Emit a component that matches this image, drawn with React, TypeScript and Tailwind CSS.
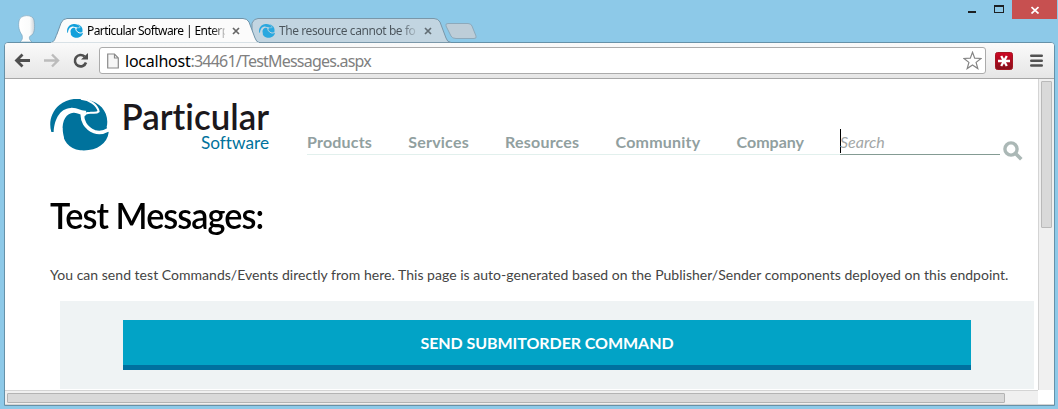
import React from "react";

function Swirl({ className, fill, gap }: { className: string; fill: string; gap: string }) {
  return (
    <svg className={className} viewBox="6 8 176 158" preserveAspectRatio="none">
      <path
        fill={fill}
        d="M10 108C2 82 8 48 34 26C58 7 92 3 118 10C160 18 184 54 175 93L181 110C176 146 142 168 96 164C60 158 40 130 43 95L20 108Z"
      />
      <path
        fill={gap}
        d="M17 112C17 74 34 36 68 35C90 34 96 45 114 44L112 58C98 60 90 49 76 50C56 51 41 72 44 106L48 128L20 124Z"
      />
      <path fill="none" stroke={gap} strokeWidth="11" d="M104 48C98 74 114 97 138 107C154 113 170 109 186 98" />
      <path
        fill="none"
        stroke={gap}
        strokeWidth="6"
        d="M98 7C124 10 147 25 151 46C145 52 137 49 126 50C115 50 108 54 104 62"
      />
    </svg>
  );
}

function TabClose({ color }: { color: string }) {
  return (
    <svg className="h-[8px] w-[8px] shrink-0" viewBox="0 0 8 8">
      <path d="M1 1L7 7M7 1L1 7" stroke={color} strokeWidth="1.7" />
    </svg>
  );
}

function TitleBar() {
  return (
    <div className="flex h-[43px] items-start">
      <svg className="ml-[17px] mt-[14px] h-[28px] w-[20px] shrink-0" viewBox="0 0 20 28">
        <defs>
          <linearGradient id="avatar" x1="0" x2="1">
            <stop offset="0" stopColor="#ffffff" />
            <stop offset="0.7" stopColor="#fafbfb" />
            <stop offset="1" stopColor="#cbd2d7" />
          </linearGradient>
        </defs>
        <path
          d="M3 28C5 26 6 25 5 21C2 17 1 12 2 7C3 0 16 0 17 6C18 12 18 18 15 21C12 22 12 24 13 26L15 28Z"
          fill="url(#avatar)"
          stroke="#7ca6bf"
          strokeWidth=".7"
        />
      </svg>
      <div className="relative mt-[18px] h-[25px] w-[441px] shrink-0">
        <svg className="absolute left-0 top-0 h-[25px] w-[441px]" viewBox="37 18 441 25">
          <path
            d="M250 42.5C254 42 251 37 252 32L252 23Q254 18.500 258 18.500H434Q438 18.500 440 22L446 38Q447 42 451 42.500Z"
            fill="#c2d5e1"
            stroke="#7a97a9"
          />
          <path
            d="M448 23.500H468Q471 23.500 472 26L476 36Q477 38.500 474 38.500H456Q452 38.500 451 36L446 26Q445 23.500 448 23.500Z"
            fill="#bdcdd8"
            stroke="#8da9bb"
          />
          <path
            d="M50 43C55 42 55 38 57 34L61 23Q63 18.500 67 18.500H243Q247 18.500 249 22L255 38Q256 42 260 43Z"
            fill="#fbfbfb"
            stroke="#6f93a9"
          />
          <path d="M51 43H259" stroke="#fafafa" strokeWidth="1" />
        </svg>
        <div className="relative flex h-[25px] items-center font-['Noto_Sans','Open_Sans',sans-serif] text-[12px] leading-[25px]">
          <Swirl className="ml-[30px] h-[14px] w-[16px] shrink-0" fill="#13a0db" gap="#fbfbfb" />
          <span className="ml-[4px] w-[138px] whitespace-nowrap bg-linear-to-r from-black from-88% to-[#cccccc] bg-clip-text tracking-[-0.58px] text-transparent">
            Particular Software | Enterp
          </span>
          <span className="ml-[7px] flex">
            <TabClose color="#666666" />
          </span>
          <Swirl className="ml-[19px] h-[14px] w-[16px] shrink-0" fill="#2aa8df" gap="#c2d5e1" />
          <span className="ml-[4px] w-[138px] whitespace-nowrap bg-linear-to-r from-[#4b555c] from-88% to-[#b4c5d0] bg-clip-text tracking-[-0.42px] text-transparent">
            The resource cannot be fo
          </span>
          <span className="ml-[7px] flex">
            <TabClose color="#626d74" />
          </span>
        </div>
      </div>
      <div className="ml-auto mr-[1px] flex h-[19px]">
        <svg className="h-[19px] w-[45px]" viewBox="0 0 45 19">
          <path d="M1 12H9" stroke="#1d2023" strokeWidth="2" />
          <path d="M27 5h10v8H27Z M28 7v5h8V7Z" fill="#1d2023" fillRule="evenodd" />
        </svg>
        <div className="flex h-[19px] w-[45px] items-center justify-center bg-[#c75050]">
          <svg className="h-[8px] w-[8px]" viewBox="0 0 8 8">
            <path d="M.5 1L7.500 7.500M7.500 1L.5 7.500" stroke="#fff" strokeWidth="1.700" />
          </svg>
        </div>
      </div>
    </div>
  );
}

function Toolbar() {
  return (
    <div className="flex h-[36px] shrink-0 items-center border-b border-[#a7a7a7] bg-linear-to-b from-[#fafafa] to-[#e6e6e6]">
      <svg className="h-[35px] w-[94px] shrink-0" viewBox="5 43 94 35">
        <path d="M30 60.500H16.500M22.500 54.500L16.500 60.500L22.500 66.500" fill="none" stroke="#4f4f4f" strokeWidth="2.800" />
        <path d="M44 60.500H57.500M52 54.500L58 60.500L52 66.500" fill="none" stroke="#bcbcbc" strokeWidth="2.400" />
        <path d="M84.500 56.500A5.700 5.700 0 1 0 86 62.500" fill="none" stroke="#505050" strokeWidth="2.600" />
        <path d="M81 59.500H88V53Z" fill="#505050" />
      </svg>
      <div className="flex h-[27px] w-[887px] shrink-0 items-center rounded-[3px] border border-[#ababab] bg-white">
        <svg className="ml-[7px] h-[16px] w-[12px]" viewBox="0 0 12 16">
          <path d="M.7 1H7.500L11.300 5V15H.7ZM7.500 1V5H11.300" fill="#f6f6f6" stroke="#8a8a8a" strokeWidth="1.200" />
        </svg>
        <span className="ml-[6px] whitespace-nowrap font-['Noto_Sans','Open_Sans',sans-serif] text-[16px] leading-[24px] tracking-[-0.79px] text-[#808080]">
          <span className="tracking-[-0.24px] text-black">localhost</span>:34461/TestMessages.aspx
        </span>
        <svg className="ml-auto mr-[3px] h-[19px] w-[19px]" viewBox="0 0 19 19">
          <path
            d="M9.500 1.300L11.700 7.200L18 7.500L13.100 11.400L14.800 17.500L9.500 14L4.200 17.500L5.900 11.400L1 7.500L7.300 7.200Z"
            fill="#fff"
            stroke="#858585"
            strokeWidth="1.200"
          />
        </svg>
      </div>
      <svg className="ml-[9px] h-[18px] w-[18px] shrink-0" viewBox="0 0 18 18">
        <defs>
          <linearGradient id="ext" x1="0" y1="0" x2="0" y2="1">
            <stop offset="0" stopColor="#cf0624" />
            <stop offset="1" stopColor="#86101b" />
          </linearGradient>
        </defs>
        <rect x=".5" y=".5" width="17" height="17" rx="2" fill="url(#ext)" stroke="#a41722" />
        <path d="M3 9H15M6.200 4L11.800 14M11.800 4L6.200 14" stroke="#fff" strokeWidth="2.300" />
      </svg>
      <svg className="ml-[17px] h-[13px] w-[13px] shrink-0" viewBox="0 0 13 13">
        <path d="M1.200 1.700H11.800M1.200 6.700H11.800M1.200 11.500H11.800" stroke="#525252" strokeWidth="2.400" strokeLinecap="round" />
      </svg>
    </div>
  );
}

function Brand() {
  return (
    <a className="flex w-[220px] shrink-0">
      <Swirl className="mt-px h-[52px] w-[59px] shrink-0" fill="#00729c" gap="#fff" />
      <svg className="ml-[13px] h-[56px] w-[150px] overflow-visible" viewBox="122 98 150 56">
        <text
          x="121.5"
          y="129.5"
          textLength="147.5"
          lengthAdjust="spacingAndGlyphs"
          fill="#1b181c"
          className="font-['Lato',sans-serif] text-[36px] font-semibold [font-variant-ligatures:none]"
        >
          Particular
        </text>
        <text
          x="201"
          y="149"
          textLength="68"
          lengthAdjust="spacingAndGlyphs"
          fill="#00729c"
          className="font-['Lato',sans-serif] text-[17px] [font-variant-ligatures:none]"
        >
          Software
        </text>
      </svg>
    </a>
  );
}

function Header() {
  return (
    <header className="flex h-[58px]">
      <Brand />
      <nav className="ml-[37px] mt-[31px] flex h-[26px] w-[533px] shrink-0 justify-between border-b border-[#e2f0ed] pr-[36px] font-['Lato',sans-serif] text-[16px] font-bold leading-[26px] tracking-[0.2px] text-[#91a09f]">
        <a>Products</a>
        <a>Services</a>
        <a>Resources</a>
        <a>Community</a>
        <a className="tracking-normal">Company</a>
      </nav>
      <div className="mt-[31px] flex h-[26px] w-[160px] shrink-0 border-b border-[#849b93] font-['Lato',sans-serif] text-[16px] italic leading-[26px] text-[#a3a7a7]">
        <span className="h-[24px] w-px bg-black" />
        <span className="ml-[-1px]">Search</span>
      </div>
      <svg className="ml-[3px] mt-[43px] h-[20px] w-[20px] shrink-0" viewBox="0 0 20 20">
        <circle cx="8" cy="8" r="6.100" fill="none" stroke="#abb8b6" strokeWidth="3.400" />
        <path d="M12.500 12.500L18.300 18.300" stroke="#abb8b6" strokeWidth="3.600" />
      </svg>
    </header>
  );
}

function Page() {
  return (
    <main className="h-[311px] w-[1033px] shrink-0 overflow-hidden bg-white pl-[45px] pt-[19px]">
      <Header />
      <h1 className="mt-[36px] h-[48px] w-max origin-left scale-x-[0.95] whitespace-nowrap font-['Lato',sans-serif] text-[36px] font-semibold leading-[46px] tracking-[-1px] text-black">
        Test Messages:
      </h1>
      <p className="mt-[23px] h-[24px] whitespace-nowrap font-['Lato',sans-serif] text-[14px] leading-[24px] tracking-[0.027px] text-[#444444]">
        You can send test Commands/Events directly from here. This page is auto-generated based on the Publisher/Sender components deployed on this endpoint.
      </p>
      <section className="ml-[10px] mt-[14px] h-[88px] w-[974px] bg-[#eff3f4] pl-[63px] pt-[19px]">
        <button className="flex h-[50px] w-[848px] items-center justify-center border-b-[5px] border-[#00709f] bg-[#02a3c6] font-['Lato',sans-serif] text-[16px] font-bold tracking-[-0.06px] text-white">
          SEND SUBMITORDER COMMAND
        </button>
      </section>
    </main>
  );
}

export default function App() {
  return (
    <div className="flex h-[409px] w-[1058px] flex-col overflow-hidden bg-[#8dc9e8]">
      <TitleBar />
      <div className="mx-[4px] -mt-[1px] flex h-[364px] w-[1051px] flex-col overflow-hidden rounded-t-[4px] border border-[#6691a8] bg-white">
        <Toolbar />
        <div className="flex h-[311px]">
          <Page />
          <div className="w-[16px] border-l border-[#d4d4d4] bg-[#f0f0f0] pl-[2px] pt-[2px]">
            <div className="h-[147px] w-[11px] rounded-[1px] border border-[#b9b9b9] bg-[#d9d9d9]" />
          </div>
        </div>
        <div className="flex h-[15px]">
          <div className="w-[1033px] border-y border-[#d4d4d4] bg-[#f0f0f0] pl-[2px] pt-[2px]">
            <div className="h-[10px] w-[998px] rounded-[1px] border border-[#b3b3b3] bg-[#d9d9d9]" />
          </div>
          <div className="flex-1 border-b border-[#d4d4d4] bg-white" />
        </div>
      </div>
    </div>
  );
}
